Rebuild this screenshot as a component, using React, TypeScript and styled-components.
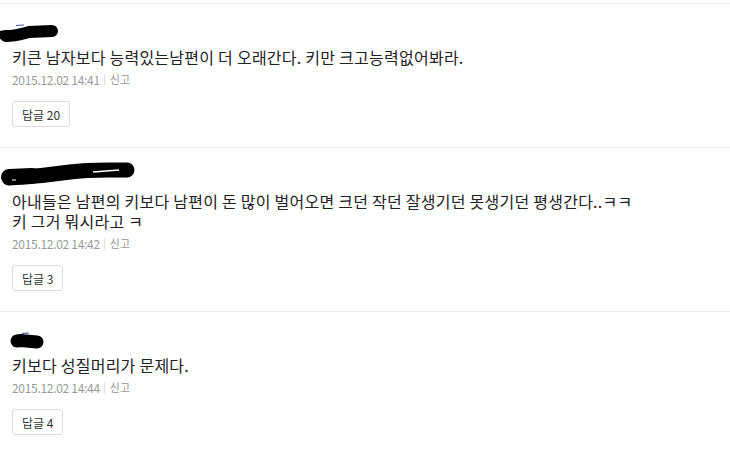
import React from 'react';
import styled, {createGlobalStyle} from 'styled-components';

interface CommentUI {
  id: number;
  text: string;
  date: string;
  replies: number;
  mark: 'short' | 'long' | 'tiny';
}

const comments: CommentUI[] = [
  {
    id: 1,
    text: '키큰 남자보다 능력있는남편이 더 오래간다. 키만 크고능력없어봐라.',
    date: '2015.12.02 14:41',
    replies: 20,
    mark: 'short',
  },
  {
    id: 2,
    text: '아내들은 남편의 키보다 남편이 돈 많이 벌어오면 크던 작던 잘생기던 못생기던 평생간다..ㅋㅋ\n키 그거 뭐시라고 ㅋ',
    date: '2015.12.02 14:42',
    replies: 3,
    mark: 'long',
  },
  {
    id: 3,
    text: '키보다 성질머리가 문제다.',
    date: '2015.12.02 14:44',
    replies: 4,
    mark: 'tiny',
  },
];

// marker scribbles drawn over the author names
function NameMark({kind}: {kind: CommentUI['mark']}) {
  if (kind === 'short') {
    return (
      <MarkSvg width="62" height="22" viewBox="0 0 62 22" $top={2}>
        <path d="M6 14 C15 14 21 12 29 10 L52 9" stroke="#000" strokeWidth="12" strokeLinecap="round" fill="none" />
        <path d="M2 13 L12 13" stroke="#000" strokeWidth="9" strokeLinecap="round" />
        <path d="M16 3.5 L24 3" stroke="#3a4fa0" strokeWidth="1.2" />
      </MarkSvg>
    );
  }
  if (kind === 'long') {
    return (
      <MarkSvg width="140" height="30" viewBox="0 0 140 30" $top={-4}>
        <path d="M9 18 C30 17 50 15 70 12 C90 9 110 10 127 10" stroke="#000" strokeWidth="15" strokeLinecap="round" fill="none" />
        <path d="M9 17 L32 16" stroke="#000" strokeWidth="16" strokeLinecap="round" />
        <path d="M93 12 L119 10" stroke="#fff" strokeWidth="1.3" />
        <path d="M12 20 L16 20" stroke="#fff" strokeWidth="1" />
      </MarkSvg>
    );
  }
  return (
    <MarkSvg width="40" height="20" viewBox="0 0 40 20" $top={3} $left={8}>
      <path d="M9 10 L13 9.5 L29 11" stroke="#000" strokeWidth="13" strokeLinecap="round" fill="none" />
      <path d="M14 2.5 L21 2" stroke="#3a4fa0" strokeWidth="1.2" />
    </MarkSvg>
  );
}

function Comment({comment}: {comment: CommentUI}) {
  return (
    <Item>
      <Author>
        <NameMark kind={comment.mark} />
      </Author>
      <Body>{comment.text}</Body>
      <Meta>
        <DateText>{comment.date}</DateText>
        <Divider />
        <Report>신고</Report>
      </Meta>
      <ReplyButton type="button">답글 {comment.replies}</ReplyButton>
    </Item>
  );
}

function App() {
  let items = comments.map(comment => <Comment key={comment.id} comment={comment} />);
  return (
    <>
      <GlobalStyle />
      <CommentList>{items}</CommentList>
    </>
  );
}

const GlobalStyle = createGlobalStyle`
  html, body {
    margin: 0;
    background: #fff;
  }
  body {
    font-family: "Noto Sans CJK KR", "Noto Sans", sans-serif;
  }
`;

const CommentList = styled.ul`
  list-style: none;
  margin: 0;
  padding: 3px 0 0;
`;

const Item = styled.li`
  border-top: 1px solid #ececec;
  padding: 16px 12px 20px;
`;

const Author = styled.div`
  position: relative;
  height: 20px;
  margin-left: -12px;
`;

const MarkSvg = styled.svg<{$top: number; $left?: number}>`
  position: absolute;
  top: ${p => p.$top}px;
  left: ${p => p.$left || 0}px;
`;

const Body = styled.p`
  margin: 7px 0 0;
  font-size: 16px;
  line-height: 20px;
  color: #222;
  letter-spacing: 0.25px;
  white-space: pre-line;
`;

const Meta = styled.div`
  display: flex;
  align-items: center;
  height: 18px;
  margin-top: 3px;
  color: #999;
`;

const DateText = styled.span`
  font-size: 12px;
  letter-spacing: -0.3px;
`;

const Divider = styled.span`
  width: 1px;
  height: 11px;
  margin: 0 5px 0 4px;
  background: #e2e2e2;
`;

const Report = styled.span`
  font-size: 11px;
`;

const ReplyButton = styled.button`
  display: block;
  height: 26px;
  margin-top: 13px;
  padding: 0 9px;
  border: 1px solid #dcdcdc;
  border-radius: 3px;
  background: #fff;
  font-family: "Noto Sans CJK KR", "Noto Sans", sans-serif;
  font-size: 12px;
  color: #333;
  cursor: pointer;
`;

export default App;
